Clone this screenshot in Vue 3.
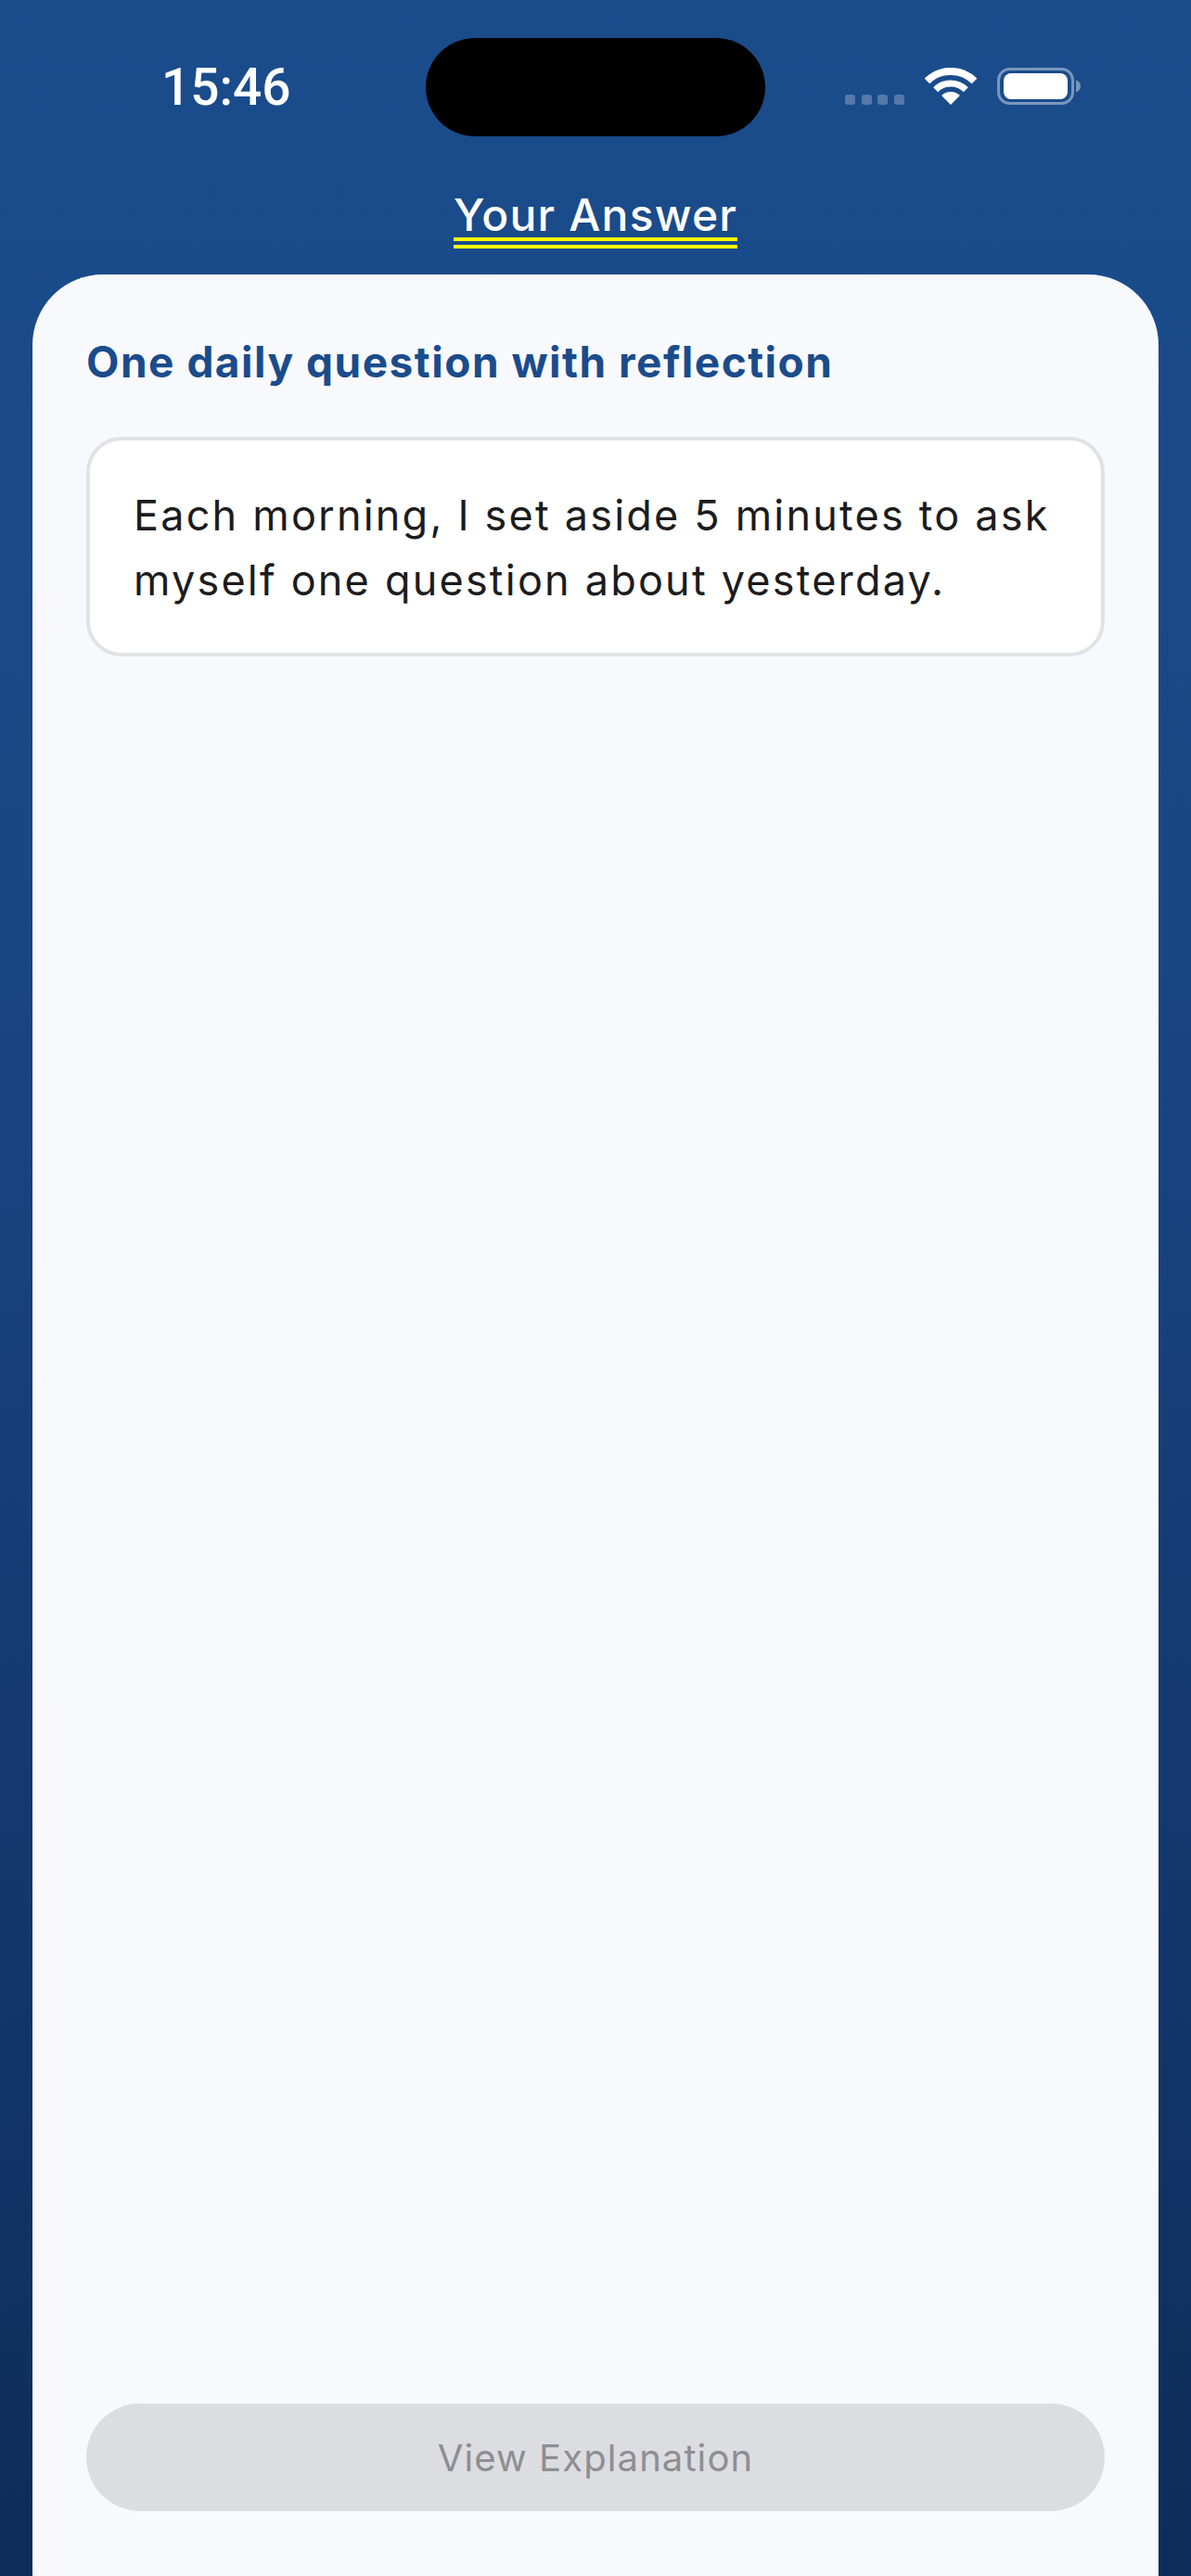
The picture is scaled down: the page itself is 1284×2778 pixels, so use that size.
<template>
  <div class="page">
    <div class="status-bar">
      <span class="time">15:46</span>
      <div class="island"></div>
      <div class="status-icons">
        <div class="signal">
          <span v-for="n in 4" :key="n" class="signal-dot"></span>
        </div>
        <svg class="wifi" width="56" height="40" viewBox="0 0 56 40" fill="none">
          <path d="M2.500 14.500A36 36 0 0 1 53.500 14.500" stroke="#fff" stroke-width="8" />
          <path d="M11.700 23.700A23 23 0 0 1 44.300 23.700" stroke="#fff" stroke-width="7" />
          <path d="M28 40L18.100 30.100A14 14 0 0 1 37.900 30.100Z" fill="#fff" />
        </svg>
        <svg class="battery" width="91" height="40" viewBox="0 0 91 40" fill="none">
          <rect x="1.500" y="1.500" width="80" height="37" rx="12" stroke="#fff" stroke-opacity=".42" stroke-width="3" />
          <rect x="7" y="6" width="69" height="28" rx="8" fill="#fff" />
          <path d="M85 13.500C88 14.500 90 17 90 20S88 25.500 85 26.500Z" fill="#fff" fill-opacity=".42" />
        </svg>
      </div>
    </div>

    <header class="header">
      <h1 class="title">Your Answer</h1>
    </header>

    <main class="card">
      <h2 class="question">One daily question with reflection</h2>
      <div class="answer">
        Each morning, I set aside 5 minutes to ask myself one question about yesterday.
      </div>
      <button class="explain" disabled>View Explanation</button>
    </main>
  </div>
</template>

<script setup>
</script>

<style scoped>
.page {
  height: 2778px;
  display: flex;
  flex-direction: column;
  background: linear-gradient(180deg, #1a4c8c 0%, #194784 36%, #0e2c5a 100%);
  font-family: Inter, "Liberation Sans", sans-serif;
  overflow: hidden;
}

.status-bar {
  display: grid;
  grid-template-columns: 1fr 366px 1fr;
  align-items: center;
  height: 106px;
  margin-top: 41px;
}
.time {
  padding-left: 174px;
  font-family: Roboto, sans-serif;
  font-size: 55px;
  font-weight: 500;
  color: #fff;
}
.island {
  height: 106px;
  border-radius: 53px;
  background: #000;
}
.status-icons {
  display: flex;
  align-items: flex-start;
  align-self: start;
  padding: 32px 0 0 86px;
}
.signal {
  display: flex;
  gap: 6.500px;
  margin-top: 29px;
  margin-right: 22px;
}
.signal-dot {
  width: 11px;
  height: 11px;
  border-radius: 3px;
  background: rgba(255, 255, 255, .26);
}
.wifi { margin-right: 22px; }

.header {
  display: flex;
  justify-content: center;
  height: 149px;
  padding-top: 60px;
  box-sizing: border-box;
}
.title {
  height: 49px;
  margin: 0;
  border-bottom: 12px double #ffff00;
  font-size: 48px;
  font-weight: 500;
  line-height: 50px;
  letter-spacing: 1.200px;
  color: #fff;
}

.card {
  flex: 1;
  display: flex;
  flex-direction: column;
  margin: 0 35px;
  padding: 0 58px 70px;
  border-radius: 76px 76px 0 0;
  background: #f8f9fd;
}
.question {
  margin: 67px 0 0;
  font-size: 46px;
  font-weight: 650;
  line-height: 54px;
  letter-spacing: 1.500px;
  color: #1a4c8c;
}
.answer {
  margin-top: 54px;
  padding: 46px 30px 43px 47px;
  border: 4px solid #e1e2e5;
  border-radius: 38px;
  background: #fff;
  font-size: 45px;
  font-weight: 370;
  line-height: 70px;
  letter-spacing: 2.200px;
  color: #1c1c1e;
}
.explain {
  height: 116px;
  margin-top: auto;
  border: none;
  border-radius: 58px;
  background: #dcdde1;
  font-family: inherit;
  font-size: 40px;
  letter-spacing: 1.100px;
  color: #8e8e93;
}
</style>
